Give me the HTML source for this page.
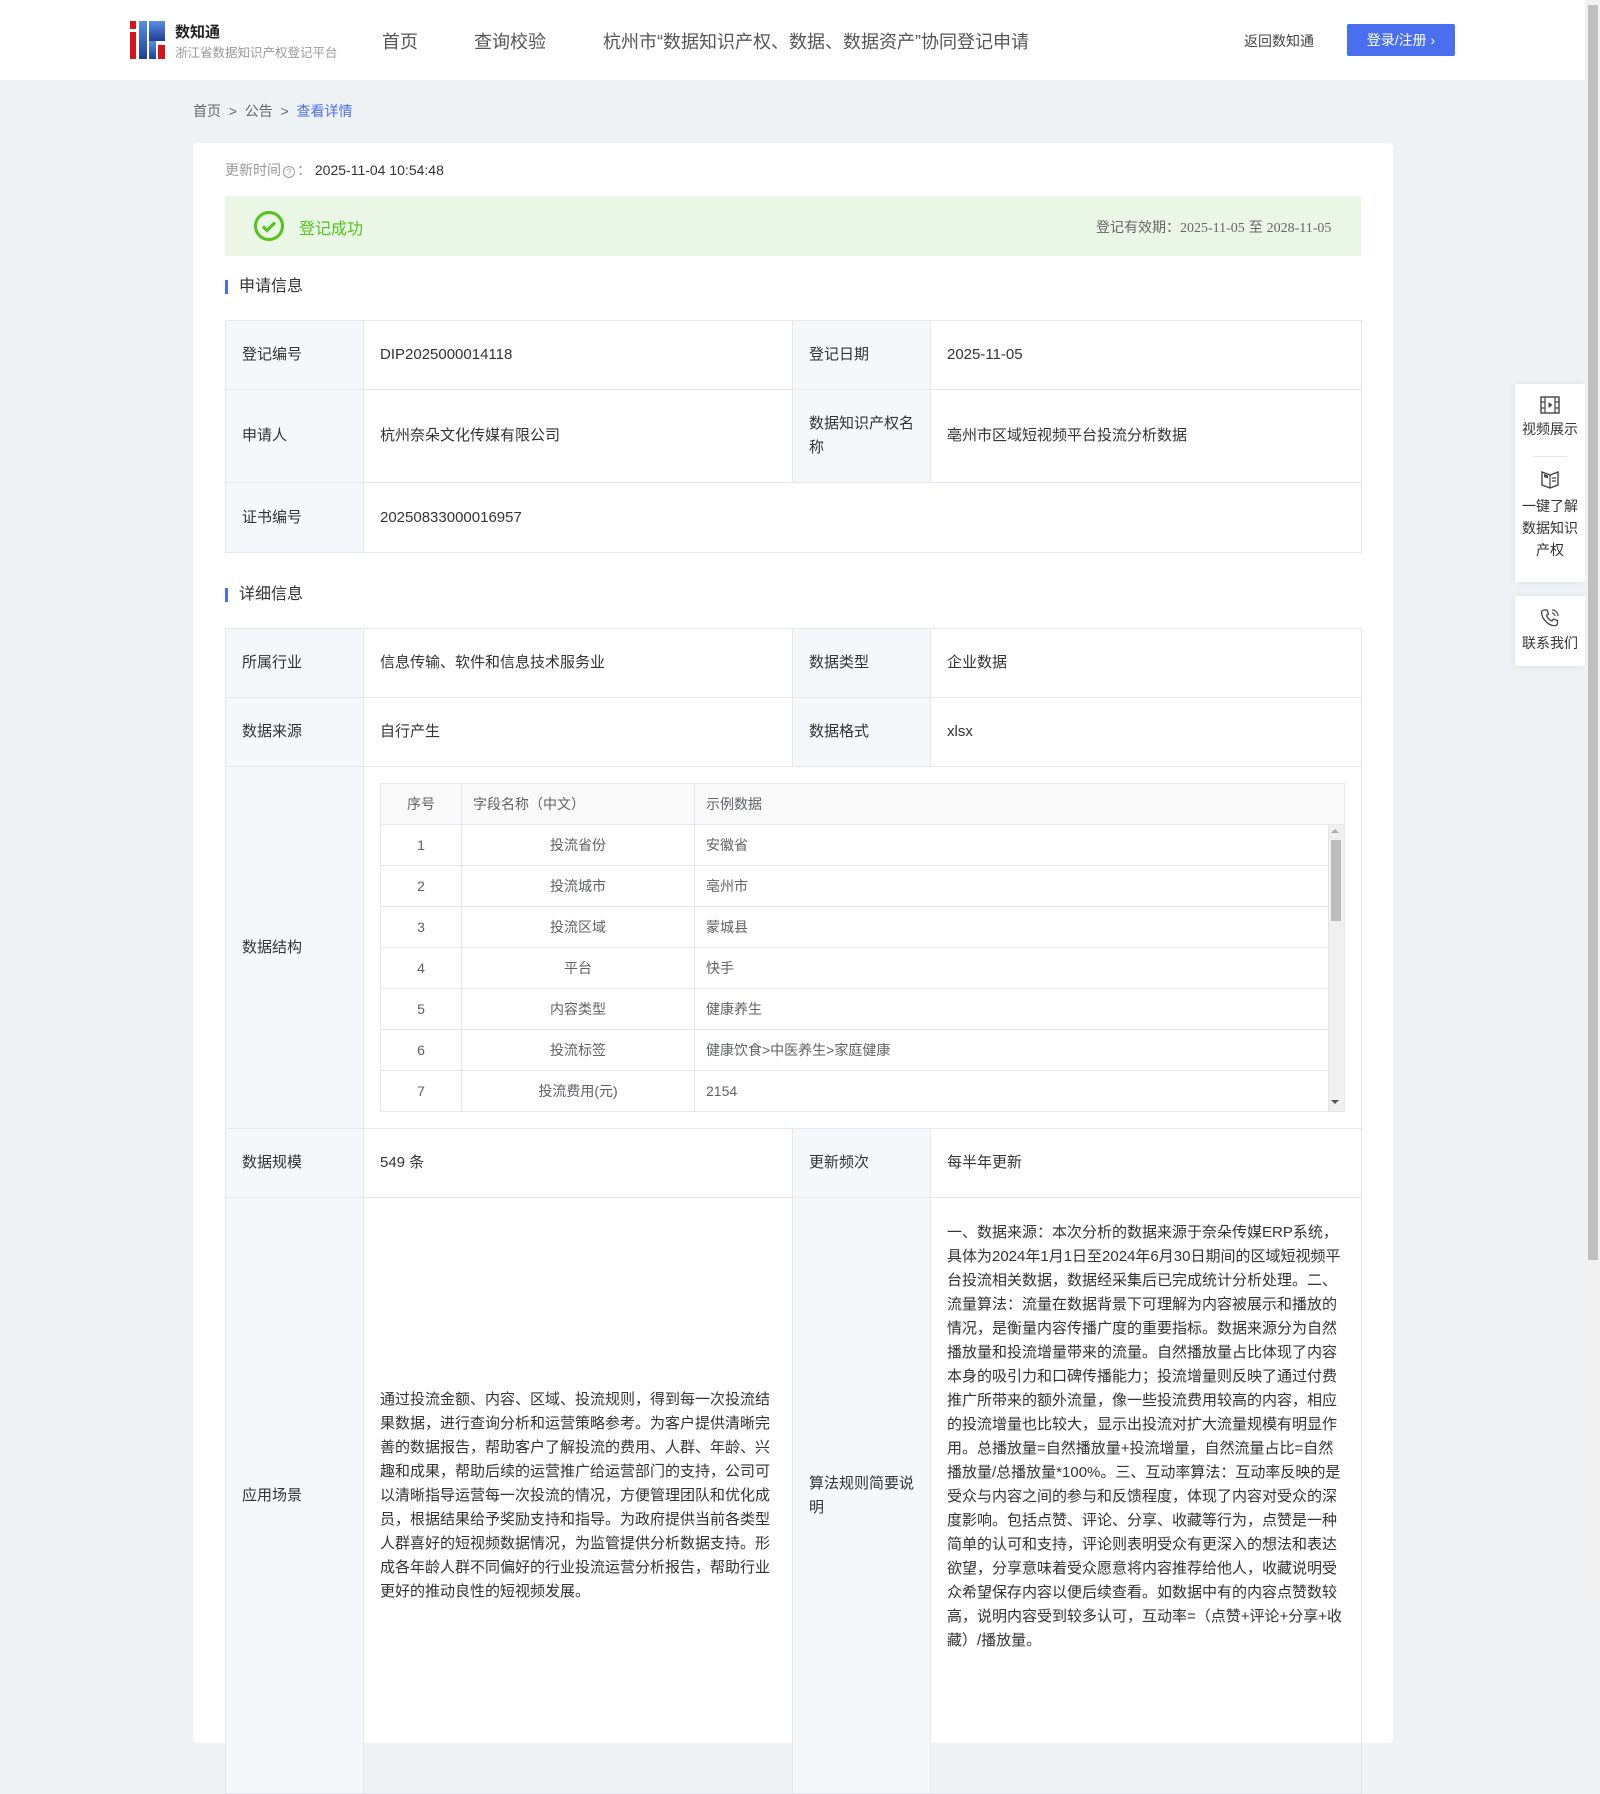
<!DOCTYPE html>
<html><head><meta charset="utf-8">
<style>
*{margin:0;padding:0;box-sizing:border-box}
body{width:1600px;height:1600px;overflow:hidden;background:#eef2f5;font-family:"Liberation Sans","Noto Sans CJK SC",sans-serif;color:#333;position:relative}
.abs{position:absolute}
.hdr{left:0;top:0;width:1585px;height:80px;background:#fff}
.nav{font-size:18px;color:#555;top:28px}
.card{left:193px;top:143px;width:1200px;height:1600px;background:#fff;border-radius:4px}
table{border-collapse:collapse;table-layout:fixed;font-size:15px}
.t td{border:1px solid #e4e7ed;padding:0 16px;color:#333;line-height:24px}
.t td.l{background:#f5f7fa}
.h{font-size:16px;color:#333;padding-left:11px;border-left:3px solid #4a6ef0;line-height:14px;height:14px}
.in td{border:1px solid #e4e7ed;height:41px;font-size:14px;color:#606266;padding:0 11px}
.side{left:1515px;width:70px;background:#fff;box-shadow:0 0 6px rgba(0,0,0,.08);text-align:center;font-size:14px;color:#333;line-height:22px}
</style></head><body>
<div class="abs hdr">
  <svg class="abs" style="left:130px;top:21px" width="36" height="38" viewBox="0 0 36 38">
    <defs><linearGradient id="g" x1="0" y1="0" x2="0" y2="1"><stop offset="0" stop-color="#5a8fe0"/><stop offset="1" stop-color="#1e3f9a"/></linearGradient></defs>
    <rect x="0" y="0" width="6" height="8" fill="#d8141b"/>
    <rect x="0" y="11" width="6" height="27" fill="#d8141b"/>
    <rect x="9" y="0" width="8" height="38" fill="url(#g)"/>
    <rect x="19" y="0" width="16" height="20" fill="url(#g)"/>
    <rect x="19" y="20" width="7" height="18" fill="url(#g)"/>
    <rect x="28" y="24" width="7" height="14" fill="#d8141b"/>
  </svg>
  <div class="abs" style="left:175px;top:21px;font-size:15px;font-weight:bold;color:#222">数知通</div>
  <div class="abs" style="left:175px;top:42px;font-size:12.5px;color:#999">浙江省数据知识产权登记平台</div>
  <div class="abs nav" style="left:382px">首页</div>
  <div class="abs nav" style="left:474px">查询校验</div>
  <div class="abs nav" style="left:603px">杭州市“数据知识产权、数据、数据资产”协同登记申请</div>
  <div class="abs" style="left:1244px;top:31px;font-size:14px;color:#444">返回数知通</div>
  <div class="abs" style="left:1347px;top:24px;width:108px;height:32px;background:#4a6ef0;border-radius:2px;color:#fff;font-size:14px;line-height:32px;text-align:center">登录/注册 ›</div>
</div>
<div class="abs" style="left:193px;top:101px;font-size:14px;color:#666">首页 &nbsp;&gt;&nbsp; 公告 &nbsp;&gt;&nbsp; <span style="color:#4a6ef0">查看详情</span></div>
<div class="abs card"></div>
<div class="abs" style="left:225px;top:160px;font-size:14px;color:#999">更新时间<span style="display:inline-block;width:12px;height:12px;border:1px solid #999;border-radius:50%;font-size:9px;line-height:10px;text-align:center;margin:0 2px">?</span>： <span style="color:#333">2025-11-04 10:54:48</span></div>
<div class="abs" style="left:225px;top:196px;width:1136px;height:60px;background:#ebf7e6"></div>
<svg class="abs" style="left:253px;top:210px" width="32" height="32" viewBox="0 0 32 32"><circle cx="16" cy="16" r="13.5" fill="none" stroke="#52c41a" stroke-width="3"/><path d="M10 16.5l4 4 8-8" fill="none" stroke="#52c41a" stroke-width="3.2"/></svg>
<div class="abs" style="left:299px;top:215px;font-size:16px;color:#52c41a">登记成功</div>
<div class="abs" style="left:1096px;top:217px;font-size:14px;color:#666">登记有效期：<span style="font-family:'Liberation Serif',serif">2025-11-05</span> 至 <span style="font-family:'Liberation Serif',serif">2028-11-05</span></div>
<div class="abs h" style="left:225px;top:280px">申请信息</div>
<table class="abs t" style="left:225px;top:320px;width:1136px">
<colgroup><col style="width:138px"><col style="width:429px"><col style="width:138px"><col style="width:431px"></colgroup>
<tr style="height:69px"><td class="l">登记编号</td><td>DIP2025000014118</td><td class="l">登记日期</td><td>2025-11-05</td></tr>
<tr style="height:93px"><td class="l">申请人</td><td>杭州奈朵文化传媒有限公司</td><td class="l">数据知识产权名称</td><td>亳州市区域短视频平台投流分析数据</td></tr>
<tr style="height:70px"><td class="l">证书编号</td><td colspan="3">20250833000016957</td></tr>
</table>
<div class="abs h" style="left:225px;top:588px">详细信息</div>
<table class="abs t" style="left:225px;top:628px;width:1136px">
<colgroup><col style="width:138px"><col style="width:429px"><col style="width:138px"><col style="width:431px"></colgroup>
<tr style="height:69px"><td class="l">所属行业</td><td>信息传输、软件和信息技术服务业</td><td class="l">数据类型</td><td>企业数据</td></tr>
<tr style="height:69px"><td class="l">数据来源</td><td>自行产生</td><td class="l">数据格式</td><td>xlsx</td></tr>
<tr style="height:362px"><td class="l">数据结构</td><td colspan="3"></td></tr>
<tr style="height:69px"><td class="l">数据规模</td><td>549 条</td><td class="l">更新频次</td><td>每半年更新</td></tr>
<tr style="height:596px"><td class="l">应用场景</td><td>通过投流金额、内容、区域、投流规则，得到每一次投流结果数据，进行查询分析和运营策略参考。为客户提供清晰完善的数据报告，帮助客户了解投流的费用、人群、年龄、兴趣和成果，帮助后续的运营推广给运营部门的支持，公司可以清晰指导运营每一次投流的情况，方便管理团队和优化成员，根据结果给予奖励支持和指导。为政府提供当前各类型人群喜好的短视频数据情况，为监管提供分析数据支持。形成各年龄人群不同偏好的行业投流运营分析报告，帮助行业更好的推动良性的短视频发展。</td><td class="l">算法规则简要说明</td><td style="vertical-align:top;padding:23px 16px 0">一、数据来源：本次分析的数据来源于奈朵传媒ERP系统，具体为2024年1月1日至2024年6月30日期间的区域短视频平台投流相关数据，数据经采集后已完成统计分析处理。二、流量算法：流量在数据背景下可理解为内容被展示和播放的情况，是衡量内容传播广度的重要指标。数据来源分为自然播放量和投流增量带来的流量。自然播放量占比体现了内容本身的吸引力和口碑传播能力；投流增量则反映了通过付费推广所带来的额外流量，像一些投流费用较高的内容，相应的投流增量也比较大，显示出投流对扩大流量规模有明显作用。总播放量=自然播放量+投流增量，自然流量占比=自然播放量/总播放量*100%。三、互动率算法：互动率反映的是受众与内容之间的参与和反馈程度，体现了内容对受众的深度影响。包括点赞、评论、分享、收藏等行为，点赞是一种简单的认可和支持，评论则表明受众有更深入的想法和表达欲望，分享意味着受众愿意将内容推荐给他人，收藏说明受众希望保存内容以便后续查看。如数据中有的内容点赞数较高，说明内容受到较多认可，互动率=（点赞+评论+分享+收藏）/播放量。</td></tr>
</table>
<table class="abs in" style="left:380px;top:783px;width:964px">
<colgroup><col style="width:81px"><col style="width:233px"><col style="width:650px"></colgroup>
<tr style="background:#fafafa"><td style="text-align:center">序号</td><td>字段名称（中文）</td><td>示例数据</td></tr>
<tr><td style="text-align:center">1</td><td style="text-align:center">投流省份</td><td>安徽省</td></tr>
<tr><td style="text-align:center">2</td><td style="text-align:center">投流城市</td><td>亳州市</td></tr>
<tr><td style="text-align:center">3</td><td style="text-align:center">投流区域</td><td>蒙城县</td></tr>
<tr><td style="text-align:center">4</td><td style="text-align:center">平台</td><td>快手</td></tr>
<tr><td style="text-align:center">5</td><td style="text-align:center">内容类型</td><td>健康养生</td></tr>
<tr><td style="text-align:center">6</td><td style="text-align:center">投流标签</td><td>健康饮食&gt;中医养生&gt;家庭健康</td></tr>
<tr><td style="text-align:center">7</td><td style="text-align:center">投流费用(元)</td><td>2154</td></tr>
</table>
<div class="abs" style="left:1328px;top:825px;width:16px;height:286px;background:#f0f0f0;border-left:1px solid #e4e4e4"></div>
<div class="abs" style="left:1331px;top:840px;width:10px;height:81px;background:#bdbdbd"></div>
<div class="abs" style="left:1331px;top:829px;width:0;height:0;border:4px solid transparent;border-bottom-color:#aaa;border-top:0"></div>
<div class="abs" style="left:1331px;top:1100px;width:0;height:0;border:4px solid transparent;border-top-color:#555;border-bottom:0"></div>

<div class="abs side" style="top:384px;height:198px">
  <svg style="margin-top:12px" width="20" height="18" viewBox="0 0 20 18"><rect x="1" y="1" width="18" height="16" fill="none" stroke="#444" stroke-width="1.4"/><path d="M5 1v16M15 1v16M1 6h4M1 12h4M15 6h4M15 12h4" stroke="#444" stroke-width="1.2"/><path d="M8.5 6v6l4-3z" fill="#444"/></svg>
  <div style="margin-top:-2px">视频展示</div>
  <div style="width:34px;height:1px;background:#e6e6e6;margin:16px auto 12px"></div>
  <svg width="20" height="20" viewBox="0 0 20 20"><path d="M2 3l8 3 8-3v13l-8 3-8-3z" fill="none" stroke="#444" stroke-width="1.4"/><path d="M10 6v13M12 9h4M12 12h4" stroke="#444" stroke-width="1.2"/><path d="M4 5l4 1.5v3L4 8z" fill="#444"/></svg>
  <div>一键了解<br>数据知识<br>产权</div>
</div>
<div class="abs side" style="top:596px;height:70px">
  <svg style="margin-top:12px" width="20" height="20" viewBox="0 0 20 20"><path d="M4 2l3 0 1.5 4-2 1.5c1 2.5 3 4.5 5.5 5.5l1.5-2 4 1.5v3c0 1-1 2-2 2C9 18.5 1.5 11 1.5 4c0-1 1-2 2.5-2z" fill="none" stroke="#444" stroke-width="1.3"/><path d="M12 2a6 6 0 016 6M12 5a3 3 0 013 3" fill="none" stroke="#444" stroke-width="1.2"/></svg>
  <div style="margin-top:-2px">联系我们</div>
</div>
<div class="abs" style="left:1585px;top:0;width:15px;height:1600px;background:#f1f1f1"></div>
<div class="abs" style="left:1588px;top:5px;width:10px;height:1255px;background:#bfbfbf"></div>
</body></html>
